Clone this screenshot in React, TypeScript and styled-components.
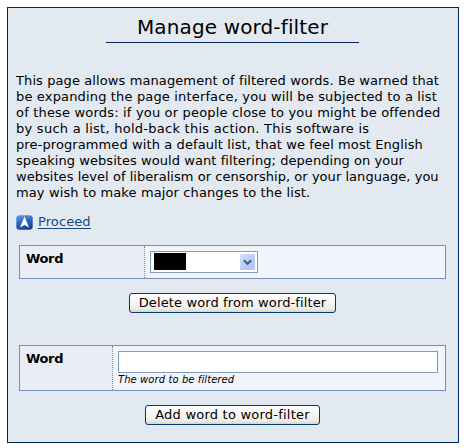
import React from 'react';
import styled, { createGlobalStyle } from 'styled-components';

const GlobalStyle = createGlobalStyle`
  * { box-sizing: border-box; }
  body {
    margin: 0;
    background: #fff;
    color: #000;
    font: 13px/16px Verdana, 'DejaVu Sans', sans-serif;
  }
`;

const Panel = styled.main`
  width: 452px;
  height: 436px;
  margin: 7px 0 0 7px;
  padding: 0 12px 0 11px;
  border: 1px solid #002664;
  background: #e3e9f1;
  display: flex;
  flex-direction: column;
`;

const Title = styled.h1`
  width: 253px;
  height: 35px;
  margin: 0 0 30px;
  padding-top: 7px;
  align-self: center;
  border-bottom: 1px solid #002664;
  font-size: 20px;
  font-weight: 400;
  line-height: 24px;
  letter-spacing: 0.13px;
  text-align: center;
  white-space: nowrap;
`;

const Intro = styled.p`
  margin: 0 0 0 -3px;
`;

const Line = styled.span<{ $tracking: number }>`
  display: block;
  height: 16px;
  white-space: nowrap;
  letter-spacing: ${({ $tracking }) => $tracking}px;
`;

const ProceedRow = styled.div`
  display: flex;
  align-items: flex-start;
  height: 16px;
  margin: 13px 0 0 -3px;

  svg { flex: none; margin-top: 1px; }
`;

const ProceedLink = styled.a`
  height: 15px;
  margin-left: 5px;
  border-bottom: 1px solid #144a84;
  color: #144a84;
  letter-spacing: 0.1px;
  line-height: 16px;
  text-decoration: none;
`;

const FieldTable = styled.section<{ $height: number; $label: number; $top: number }>`
  display: grid;
  grid-template-columns: ${({ $label }) => $label}px 1fr;
  width: 427px;
  height: ${({ $height }) => $height}px;
  margin-top: ${({ $top }) => $top}px;
  border: 1px solid #7a8fb5;
`;

const Label = styled.label`
  padding: 5px 0 0 6px;
  background: #eaedf6;
  font-weight: 700;
  letter-spacing: -0.35px;
`;

const Control = styled.div`
  padding: 5px 7px 0 5px;
  border-left: 1px dotted #7488b8;
  background: #f1f4fa;
`;

const SelectBox = styled.div`
  display: flex;
  justify-content: space-between;
  width: 108px;
  height: 22px;
  padding: 1px 2px 1px 3px;
  border: 1px solid #7f9db9;
  background: #fff;
`;

const Redaction = styled.span`
  width: 32px;
  height: 17px;
  background: #000;
`;

const SelectArrow = styled.span`
  display: flex;
  align-items: center;
  justify-content: center;
  width: 15px;
  height: 16px;
  margin-top: 1px;
  border-radius: 1px;
  background: linear-gradient(135deg, #d3e0ff, #b8cafb 60%, #aec3f8);
`;

const TextInput = styled.input`
  display: block;
  width: 320px;
  height: 22px;
  padding: 1px 3px;
  border: 1px solid #7f9db9;
  border-radius: 0;
  background: #fff;
  font: inherit;
  outline: none;
`;

const Hint = styled.em`
  display: block;
  font-size: 10px;
  line-height: 13px;
  letter-spacing: 0.08px;
`;

const Button = styled.button<{ $width: number; $shift: number; $tracking: number }>`
  width: ${({ $width }) => $width}px;
  height: 20px;
  margin: 14px 0 0 ${({ $shift }) => $shift}px;
  padding: 0;
  border: 1px solid #003c74;
  border-radius: 3px;
  background: linear-gradient(#fff, #f4f3ee 60%, #eceae2 85%, #d8d2c8);
  color: #000;
  font: inherit;
  line-height: 18px;
  letter-spacing: ${({ $tracking }) => $tracking}px;
  white-space: nowrap;
`;

const introLines: { text: string; tracking: number }[] = [
  { text: 'This page allows management of filtered words. Be warned that', tracking: 0.1 },
  { text: 'be expanding the page interface, you will be subjected to a list', tracking: 0.157 },
  { text: 'of these words: if you or people close to you might be offended', tracking: 0.18 },
  { text: 'by such a list, hold-back this action. This software is', tracking: 0.26 },
  { text: 'pre-programmed with a default list, that we feel most English', tracking: 0.1 },
  { text: 'speaking websites would want filtering; depending on your', tracking: 0.06 },
  { text: 'websites level of liberalism or censorship, or your language, you', tracking: 0.04 },
  { text: 'may wish to make major changes to the list.', tracking: 0.12 },
];

function ProceedIcon() {
  return (
    <svg width="17" height="15" viewBox="0 0 17 15" aria-hidden="true">
      <defs>
        <linearGradient id="proceedFill" x1="0" y1="0" x2="0.3" y2="1">
          <stop offset="0" stopColor="#6aa0e4" />
          <stop offset="0.5" stopColor="#2c68c4" />
          <stop offset="1" stopColor="#184794" />
        </linearGradient>
      </defs>
      <rect x="0.3" y="0.2" width="16.4" height="14.5" rx="3" fill="url(#proceedFill)" />
      <path d="M8.5 1.5 L13 12.5 L8.5 10 L4 12.5 Z" fill="#fff" />
    </svg>
  );
}

export default function App() {
  return (
    <>
      <GlobalStyle />
      <Panel>
        <Title>Manage word-filter</Title>
        <Intro>
          {introLines.map(({ text, tracking }) => (
            <Line key={text} $tracking={tracking}>{text} </Line>
          ))}
        </Intro>
        <ProceedRow>
          <ProceedIcon />
          <ProceedLink href="#">Proceed</ProceedLink>
        </ProceedRow>
        <FieldTable $height={34} $label={124} $top={15}>
          <Label>Word</Label>
          <Control>
            <SelectBox>
              <Redaction />
              <SelectArrow>
                <svg width="9" height="7" viewBox="0 0 9 7" aria-hidden="true">
                  <path d="M0.8 1.2 L4.5 4.8 L8.2 1.2" fill="none" stroke="#4d6185" strokeWidth="2.2" />
                </svg>
              </SelectArrow>
            </SelectBox>
          </Control>
        </FieldTable>
        <Button type="button" $width={207} $shift={110} $tracking={0.12}>Delete word from word-filter</Button>
        <FieldTable $height={46} $label={92} $top={32}>
          <Label htmlFor="word">Word</Label>
          <Control>
            <TextInput id="word" type="text" />
            <Hint>The word to be filtered</Hint>
          </Control>
        </FieldTable>
        <Button type="button" $width={175} $shift={126} $tracking={0.22}>Add word to word-filter</Button>
      </Panel>
    </>
  );
}
